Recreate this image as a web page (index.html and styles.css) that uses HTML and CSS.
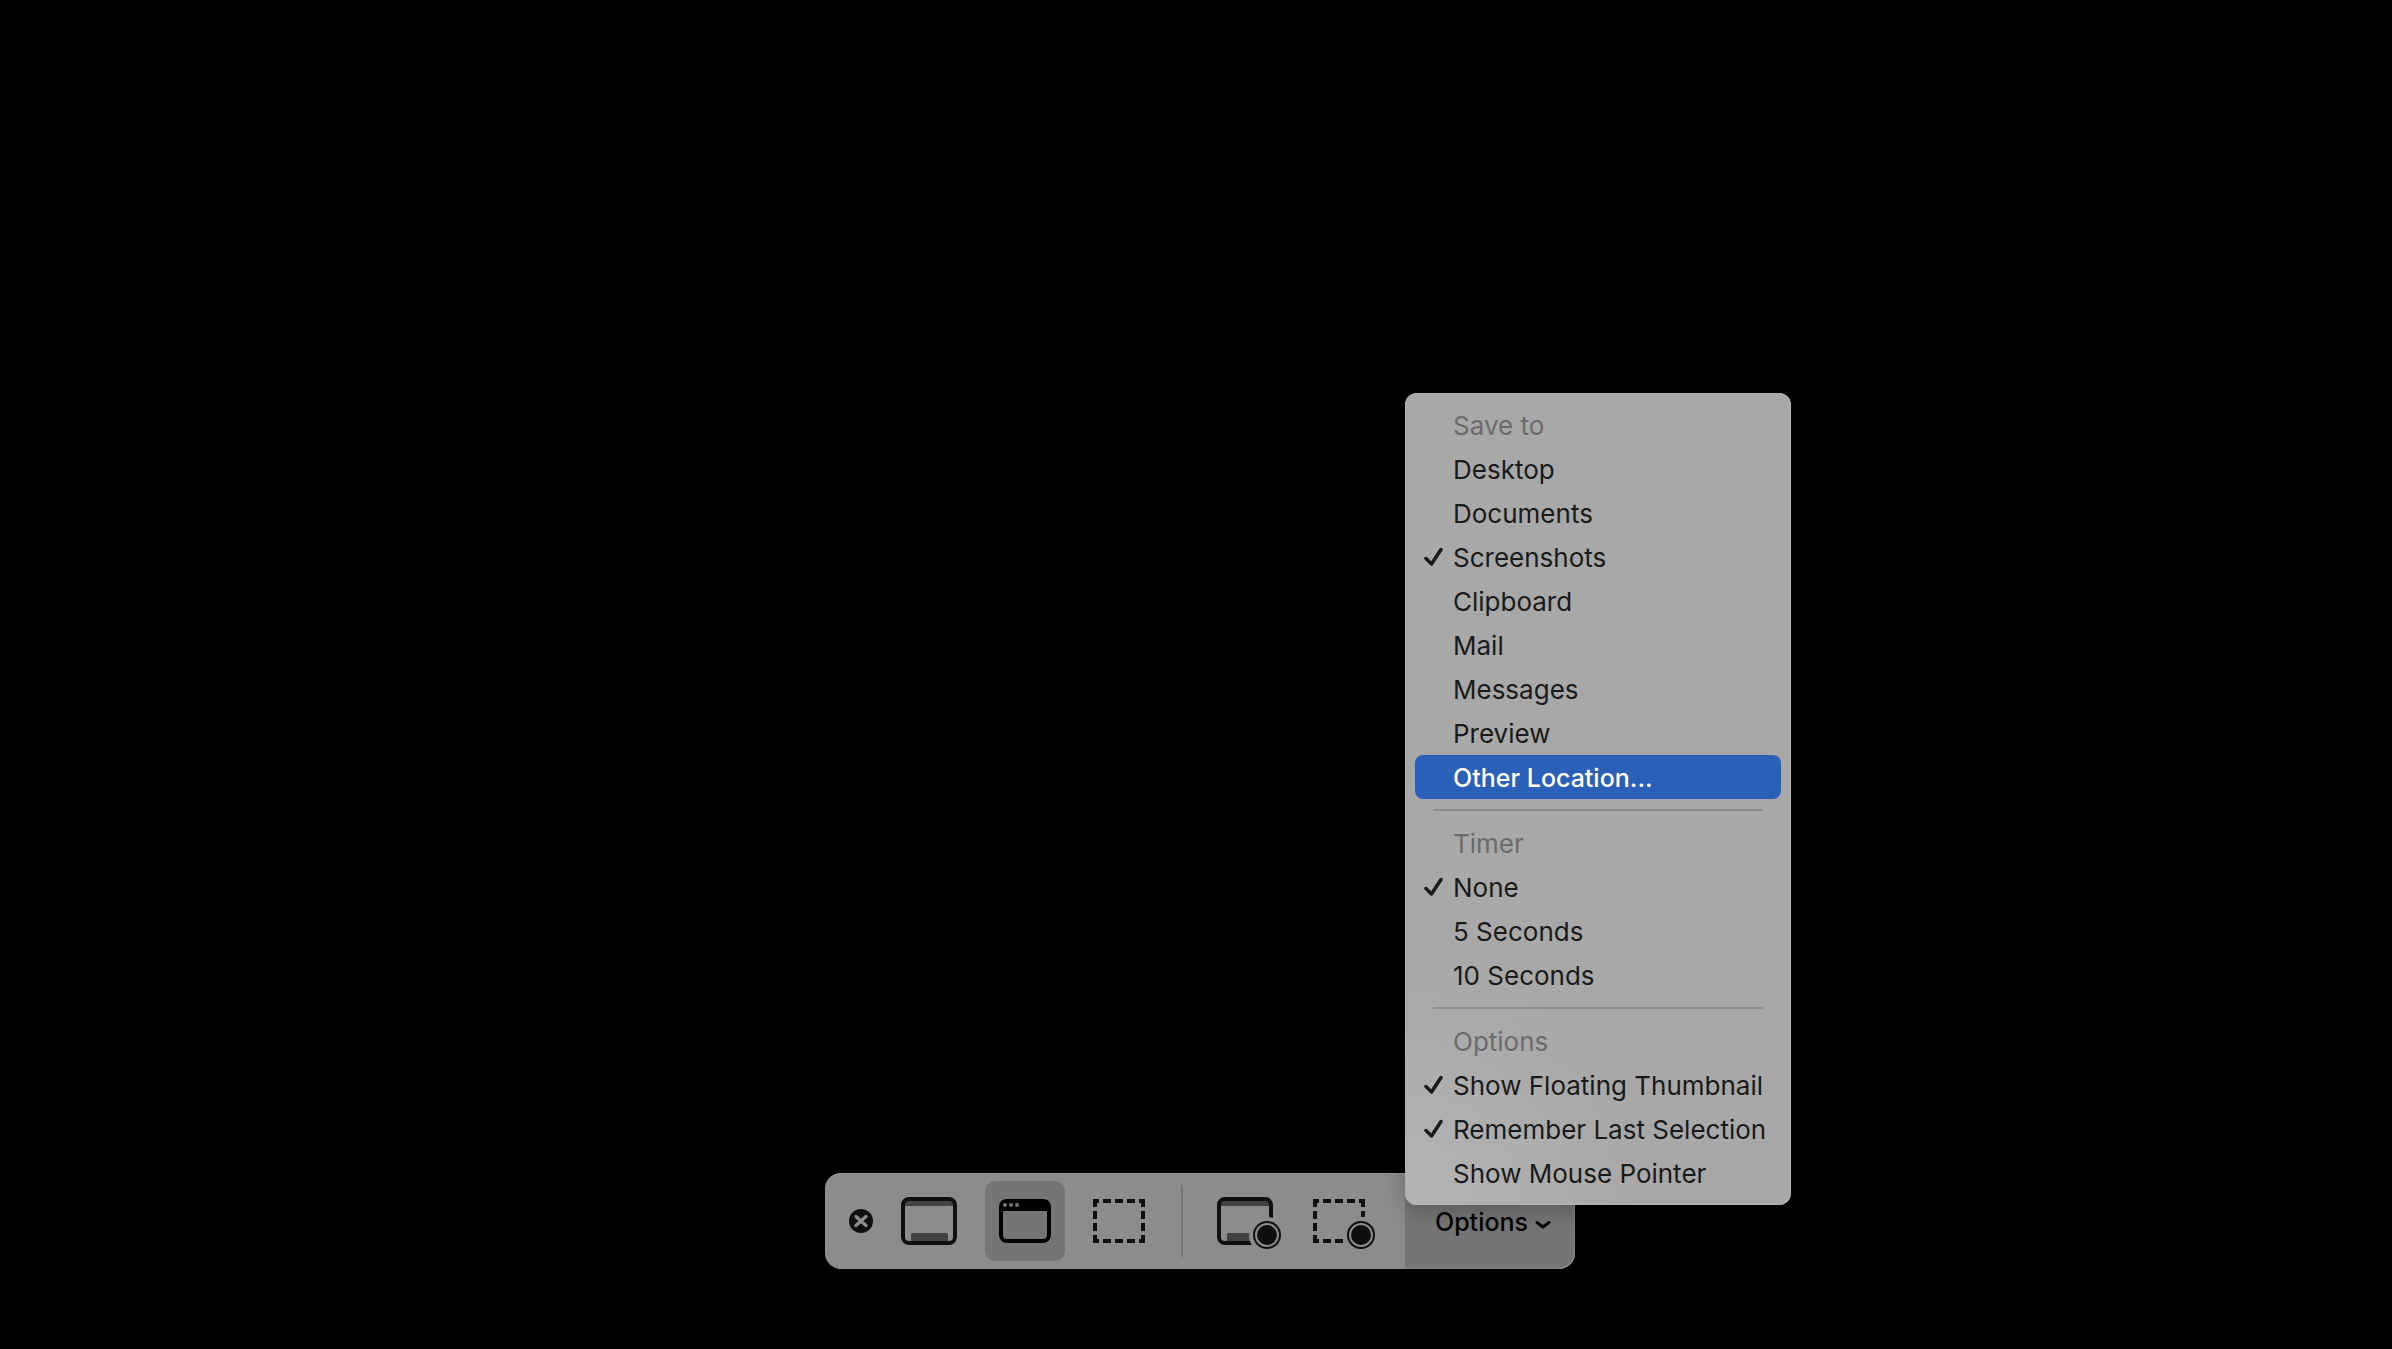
FILE: index.html
```html
<!DOCTYPE html>
<html lang="en">
<head>
<meta charset="utf-8">
<title>Screenshot</title>
<link rel="stylesheet" href="styles.css">
</head>
<body>
<main class="screen">
  <div class="toolbar" role="toolbar" aria-label="Screen capture">
    <button class="close" aria-label="Close">
      <svg viewBox="0 0 24 24" width="24" height="24"><circle cx="12" cy="12" r="12" fill="#0f0f0f"/><path d="M7 7.500L17 16.500M17 7.500L7 16.500" stroke="#8c8c8c" stroke-width="3.400" stroke-linecap="round"/></svg>
    </button>
    <button class="tool" aria-label="Capture entire screen">
      <svg class="icon" viewBox="0 0 56 48"><path d="M3 3H53V9H3zM10 37.500Q10 36 11.500 36H45.500Q47 36 47 37.500V45H10z" fill="#424242"/><rect x="2" y="2" width="52" height="44" rx="6" fill="none" stroke="#0f0f0f" stroke-width="4"/></svg>
    </button>
    <button class="tool selected" aria-label="Capture selected window" aria-pressed="true">
      <svg class="icon" viewBox="0 0 56 48"><rect x="4" y="4" width="48" height="40" rx="6" fill="none" stroke="#000" stroke-width="4"/><path d="M3 14V8Q3 3 8 3H48Q53 3 53 8V14z"/><g fill="#757575"><circle cx="8" cy="8" r="2"/><circle cx="14" cy="8" r="2"/><circle cx="20" cy="8" r="2"/></g></svg>
    </button>
    <button class="tool" aria-label="Capture selected portion">
      <svg class="icon" viewBox="0 0 56 48"><path d="M0 2H6V6H4V10H0zM10 2h8v4h-8zM22 2h8v4h-8zM34 2h8v4h-8zM46 2H52V10H48V6H46zM0 14h4v8H0zM0 26h4v8H0zM48 14h4v8h-4zM48 26h4v8h-4zM0 38H4V42H6V46H0zM10 42h8v4h-8zM22 42h8v4h-8zM34 42h8v4h-8zM48 38H52V46H46V42H48z" fill="#0f0f0f"/></svg>
    </button>
    <div class="divider"></div>
    <button class="tool" aria-label="Record entire screen">
      <svg class="icon" viewBox="0 0 56 48"><mask id="screen-cut"><path d="M0 0H56V48H0z" fill="#fff"/><circle cx="50" cy="38" r="18" fill="#000"/></mask><g mask="url(#screen-cut)"><path d="M3 3H53V9H3zM10 37.500Q10 36 11.500 36H45.500Q47 36 47 37.500V45H10z" fill="#424242"/><rect x="2" y="2" width="52" height="44" rx="6" fill="none" stroke="#0f0f0f" stroke-width="4"/></g><circle cx="50" cy="38" r="13" fill="none" stroke="#0f0f0f" stroke-width="2"/><circle cx="50" cy="38" r="10" fill="#0f0f0f"/></svg>
    </button>
    <button class="tool" aria-label="Record selected portion">
      <svg class="icon" viewBox="0 0 56 48"><path d="M0 2H6V6H4V10H0zM10 2h8v4h-8zM22 2h8v4h-8zM34 2h8v4h-8zM46 2H52V10H48V6H46zM0 14h4v8H0zM0 26h4v8H0zM48 14h4v6h-4zM0 38H4V42H6V46H0zM10 42h8v4h-8zM22 42h8v4h-8z" fill="#0f0f0f"/><circle cx="48" cy="38" r="13" fill="none" stroke="#0f0f0f" stroke-width="2"/><circle cx="48" cy="38" r="10" fill="#0f0f0f"/></svg>
    </button>
    <div class="options">
      <button class="options-button" aria-haspopup="menu" aria-expanded="true">Options
        <svg viewBox="0 0 16 10" width="16" height="10"><path d="M2 2.500L8 7L14 2.500" fill="none" stroke="#000" stroke-width="3" stroke-linecap="round" stroke-linejoin="round"/></svg>
      </button>
      <div class="menu" role="menu">
        <div class="heading">Save to</div>
        <button class="item" role="menuitemradio">Desktop</button>
        <button class="item" role="menuitemradio">Documents</button>
        <button class="item" role="menuitemradio" aria-checked="true"><svg class="check" viewBox="0 0 20 20"><path d="M2 11.500L7.500 17L17 2.500"/></svg>Screenshots</button>
        <button class="item" role="menuitemradio">Clipboard</button>
        <button class="item" role="menuitemradio">Mail</button>
        <button class="item" role="menuitemradio">Messages</button>
        <button class="item" role="menuitemradio">Preview</button>
        <button class="item active" role="menuitemradio">Other Location...</button>
        <hr class="separator">
        <div class="heading">Timer</div>
        <button class="item" role="menuitemradio" aria-checked="true"><svg class="check" viewBox="0 0 20 20"><path d="M2 11.500L7.500 17L17 2.500"/></svg>None</button>
        <button class="item" role="menuitemradio">5 Seconds</button>
        <button class="item" role="menuitemradio">10 Seconds</button>
        <hr class="separator">
        <div class="heading">Options</div>
        <button class="item" role="menuitemcheckbox" aria-checked="true"><svg class="check" viewBox="0 0 20 20"><path d="M2 11.500L7.500 17L17 2.500"/></svg>Show Floating Thumbnail</button>
        <button class="item" role="menuitemcheckbox" aria-checked="true"><svg class="check" viewBox="0 0 20 20"><path d="M2 11.500L7.500 17L17 2.500"/></svg>Remember Last Selection</button>
        <button class="item" role="menuitemcheckbox">Show Mouse Pointer</button>
      </div>
    </div>
  </div>
</main>
</body>
</html>
```
FILE: styles.css
```css
* {
  box-sizing: border-box;
}

body {
  margin: 0;
  background: #000;
  font-family: Inter, "Liberation Sans", sans-serif;
  font-size: 26px;
  color: #1a1a1a;
}

button {
  margin: 0;
  padding: 0;
  border: 0;
  background: none;
  color: inherit;
  font: inherit;
}

svg {
  display: block;
}

.screen {
  min-height: 100vh;
  padding: 0 0 80px 8px;
  display: flex;
  justify-content: center;
  align-items: flex-end;
}

.toolbar {
  display: flex;
  align-items: center;
  gap: 16px;
  height: 96px;
  padding-left: 24px;
  border-radius: 16px;
  background: #8c8c8c;
  box-shadow: inset 0 1px #999;
}

.close {
  width: 24px;
  height: 24px;
}

.tool {
  width: 80px;
  height: 80px;
  display: flex;
  align-items: center;
  justify-content: center;
  border-radius: 10px;
}

.selected {
  background: #757575;
}

.icon {
  width: 56px;
  height: 48px;
  overflow: visible;
}

.divider {
  width: 2px;
  height: 72px;
  margin: 0 6px 0 4px;
  background: #757575;
}

.options {
  position: relative;
  align-self: stretch;
  width: 170px;
  margin-left: 8px;
}

.options-button {
  width: 100%;
  height: 100%;
  padding: 2px 24px 0 30px;
  display: flex;
  align-items: center;
  justify-content: space-between;
  border-radius: 0 16px 16px 0;
  background: #757575;
  box-shadow: inset -1px -1px #858585;
  color: #000;
  font-size: 25px;
  font-weight: 500;
}

.options-button svg {
  margin-top: 6px;
}

.menu {
  position: absolute;
  left: 0;
  bottom: 64px;
  width: 386px;
  padding: 10px;
  border-radius: 12px;
  background: radial-gradient(circle at 0 100%, #b4b4b4, #a8a8a8 240px);
  box-shadow: inset 0 0 0 1px #b2b2b2, 0 4px 24px rgba(0, 0, 0, 0.25);
}

.heading,
.item {
  position: relative;
  display: flex;
  align-items: center;
  width: 100%;
  height: 44px;
  padding: 0 0 0 38px;
  border-radius: 8px;
  white-space: nowrap;
}

.heading {
  color: #6b6b6b;
}

.active {
  padding-top: 2px;
  background: #2a60b8;
  color: #fff;
  font-size: 25px;
  font-weight: 500;
}

.check {
  position: absolute;
  left: 9px;
  top: 12px;
  width: 20px;
  height: 20px;
  fill: none;
  stroke: #1a1a1a;
  stroke-width: 3.500;
  stroke-linecap: round;
  stroke-linejoin: round;
}

.separator {
  height: 2px;
  margin: 10px 18px;
  border: 0;
  background: #8c8c8c;
}
```
